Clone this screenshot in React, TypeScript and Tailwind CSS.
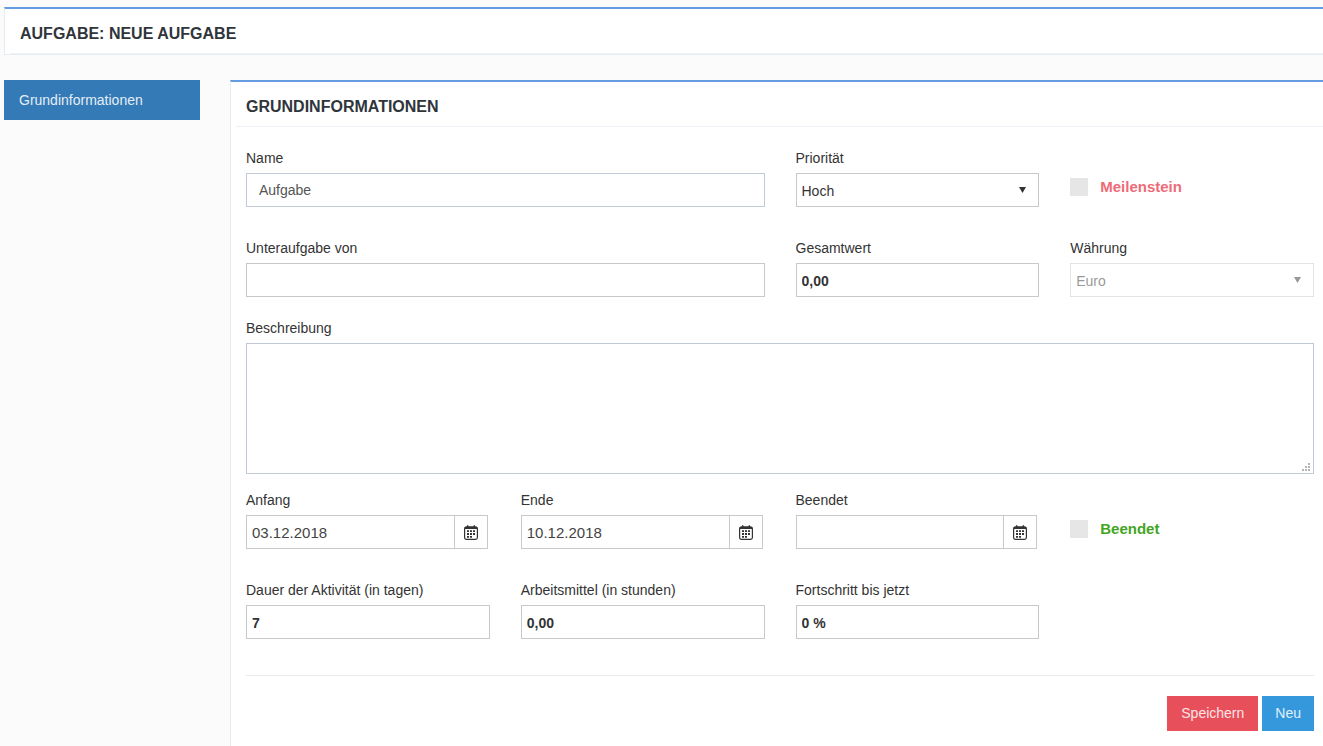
import React from "react";

const control = "block h-[34px] w-full border px-[5px] pt-0.5 text-sm outline-none";
const plain = "border-[#c9c9c9] bg-white text-[#333333]";

function Field({
  id,
  label,
  className = "",
  children,
}: {
  id: string;
  label: string;
  className?: string;
  children: React.ReactNode;
}) {
  return (
    <div className={className}>
      <label htmlFor={id} className="mb-[5px] block text-sm leading-5">
        {label}
      </label>
      {children}
    </div>
  );
}

function NumberField({ id, label, value }: { id: string; label: string; value: string }) {
  return (
    <Field id={id} label={label}>
      <input id={id} type="text" defaultValue={value} className={`${control} ${plain} font-bold`} />
    </Field>
  );
}

function SelectField({
  id,
  label,
  option,
  disabled = false,
}: {
  id: string;
  label: string;
  option: string;
  disabled?: boolean;
}) {
  return (
    <Field id={id} label={label}>
      <div className={disabled ? "relative opacity-50" : "relative"}>
        <select id={id} disabled={disabled} className={`${control} ${plain} appearance-none opacity-100`}>
          <option>{option}</option>
        </select>
        <svg
          viewBox="0 0 7 6"
          className="pointer-events-none absolute top-3.5 right-[13px] h-1.5 w-[7px] fill-[#333333]"
          aria-hidden="true"
        >
          <path d="M0 0h7L3.5 6z" />
        </svg>
      </div>
    </Field>
  );
}

function CalendarIcon() {
  return (
    <svg viewBox="0 0 14 15" className="h-[15px] w-3.5" aria-hidden="true">
      <rect x="0.6" y="2.1" width="12.8" height="12.3" rx="1.8" fill="#fff" stroke="#333" strokeWidth="1.2" />
      <path d="M0.4 4V3.2Q0.4 1.4 2.2 1.4H11.8Q13.6 1.4 13.6 3.2V4z" fill="#333" />
      <path d="M3 0.2h1.4v2.4H3zM9.6 0.2H11v2.4H9.6z" fill="#333" />
      <path
        d="M3 5.2h2v1.8H3zM6 5.2h2v1.8H6zM9 5.2h2v1.8H9zM3 8.1h2v1.8H3zM6 8.1h2v1.8H6zM9 8.1h2v1.8H9zM3 11h2v1.8H3zM6 11h2v1.8H6z"
        fill="#333"
      />
    </svg>
  );
}

function DateField({ id, label, value }: { id: string; label: string; value: string }) {
  return (
    <Field id={id} label={label}>
      <div className="mr-0.5 flex h-[34px] border border-[#c9c9c9] bg-white">
        <input
          id={id}
          type="text"
          defaultValue={value}
          className="min-w-0 flex-1 px-[5px] pt-0.5 text-[15px] text-[#444444] outline-none"
        />
        <button
          type="button"
          aria-label={`${label}: Kalender`}
          className="flex w-[33px] items-center justify-center border-l border-[#c9c9c9]"
        >
          <CalendarIcon />
        </button>
      </div>
    </Field>
  );
}

function Check({ id, label, className }: { id: string; label: string; className: string }) {
  return (
    <div className="flex h-[34px] items-center gap-3 self-end pb-1.5">
      <input id={id} type="checkbox" className="size-[18px] shrink-0 appearance-none bg-[#e6e6e6] checked:bg-[#999999]" />
      <label htmlFor={id} className={`text-[15px] leading-5 font-bold ${className}`}>
        {label}
      </label>
    </div>
  );
}

export default function App() {
  return (
    <div className="flex min-h-screen flex-col bg-[#fbfbfb] pt-[7px] pl-1 font-['Liberation_Sans',Arial,sans-serif] text-[#333333]">
      <header className="border-t-2 border-b border-l border-t-[#659be0] border-b-[#e7ecf1] border-l-[#e7ecf1] bg-white pl-[5px]">
        <h1 className="border-b border-[#eef1f5] px-2.5 pt-[15px] pb-[9px] text-base leading-5 font-bold text-[#2f353b]">
          AUFGABE: NEUE AUFGABE
        </h1>
      </header>

      <div className="mt-[25px] flex flex-1 items-stretch">
        <nav className="w-[196px] shrink-0">
          <a href="#grundinformationen" className="block bg-[#337ab7] px-[15px] py-2.5 text-sm leading-5 text-[#e4edf5]">
            Grundinformationen
          </a>
        </nav>

        <main
          id="grundinformationen"
          className="ml-[30px] min-w-0 flex-1 border-t-2 border-l border-t-[#659be0] border-l-[#e7ecf1] bg-white pl-[5px]"
        >
          <h2 className="border-b border-[#eef1f5] px-2.5 pt-[15px] pb-[9px] text-base leading-5 font-bold text-[#2f353b]">
            GRUNDINFORMATIONEN
          </h2>

          <form className="pt-[21px] pr-[9px] pb-[15px] pl-2.5" onSubmit={(e) => e.preventDefault()}>
            <div className="grid grid-cols-4 gap-x-[31px] gap-y-[31px]">
              <Field id="name" label="Name" className="col-span-2">
                <input
                  id="name"
                  type="text"
                  defaultValue="Aufgabe"
                  className="block h-[34px] w-full border border-[#c2cad8] bg-white px-3 text-sm text-[#555555] outline-none"
                />
              </Field>
              <SelectField id="prioritaet" label="Priorität" option="Hoch" />
              <Check id="meilenstein" label="Meilenstein" className="text-[#ee6b78]" />

              <Field id="unteraufgabe" label="Unteraufgabe von" className="col-span-2">
                <input id="unteraufgabe" type="text" className={`${control} ${plain}`} />
              </Field>
              <NumberField id="gesamtwert" label="Gesamtwert" value="0,00" />
              <SelectField id="waehrung" label="Währung" option="Euro" disabled />
            </div>

            <Field id="beschreibung" label="Beschreibung" className="mt-[21px]">
              <div className="relative">
                <textarea
                  id="beschreibung"
                  className="block h-[131px] w-full resize-none border border-[#c2cad8] bg-white px-3 py-1.5 text-sm text-[#555555] outline-none"
                />
                <svg
                  viewBox="0 0 8 8"
                  className="pointer-events-none absolute right-1 bottom-[3px] size-2 fill-[#b5b5b5]"
                  aria-hidden="true"
                >
                  <path d="M6 0h2v2H6zM3 3h2v2H3zM6 3h2v2H6zM0 6h2v2H0zM3 6h2v2H3zM6 6h2v2H6z" />
                </svg>
              </div>
            </Field>

            <div className="mt-4 grid grid-cols-4 gap-x-[31px] gap-y-[31px]">
              <DateField id="anfang" label="Anfang" value="03.12.2018" />
              <DateField id="ende" label="Ende" value="10.12.2018" />
              <DateField id="beendet-am" label="Beendet" value="" />
              <Check id="beendet" label="Beendet" className="text-[#43a51f]" />

              <NumberField id="dauer" label="Dauer der Aktivität (in tagen)" value="7" />
              <NumberField id="arbeitsmittel" label="Arbeitsmittel (in stunden)" value="0,00" />
              <NumberField id="fortschritt" label="Fortschritt bis jetzt" value="0 %" />
            </div>

            <div className="mt-9 flex justify-end gap-1 border-t border-[#eaeaea] pt-5">
              <button type="submit" className="h-[35px] bg-[#e7505a] px-3.5 pb-0.5 text-sm text-[#fbe5e7]">
                Speichern
              </button>
              <button type="button" className="h-[35px] bg-[#3598dc] px-[13px] pb-0.5 text-sm text-[#e1f0fa]">
                Neu
              </button>
            </div>
          </form>
        </main>
      </div>
    </div>
  );
}
